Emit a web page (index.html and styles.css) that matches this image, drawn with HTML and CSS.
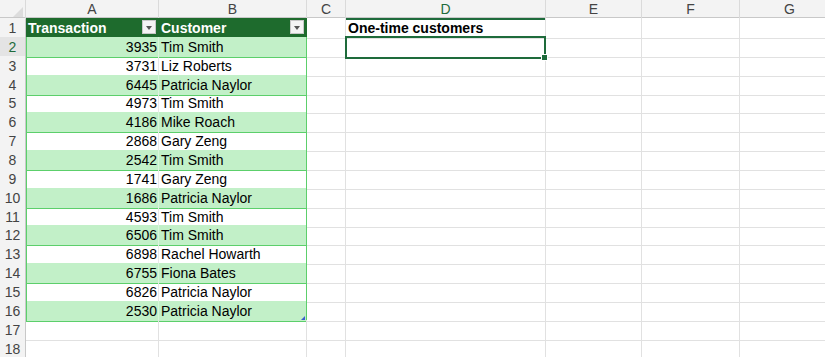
FILE: index.html
```html
<!DOCTYPE html>
<html lang="en">
<head>
    <meta charset="UTF-8">
    <meta name="viewport" content="width=device-width, initial-scale=1.0">
    <title>One-time customers</title>
    <link rel="stylesheet" href="styles.css">
</head>
<body>
    <div class="sheet">
        <div class="row colhead">
            <div class="corner"></div>
            <div class="ch">A</div>
            <div class="ch">B</div>
            <div class="ch">C</div>
            <div class="ch sel">D</div>
            <div class="ch">E</div>
            <div class="ch">F</div>
            <div class="ch">G</div>
        </div>

        <div class="row">
            <div class="rh">1</div>
            <div class="c th">Transaction<span class="filter"></span></div>
            <div class="c th">Customer<span class="filter"></span></div>
            <div class="c"></div>
            <div class="c bold">One-time customers</div>
            <div class="c"></div><div class="c"></div><div class="c"></div>
        </div>
        <div class="row">
            <div class="rh sel">2</div>
            <div class="c t band num">3935</div><div class="c t band last">Tim Smith</div>
            <div class="c"></div><div class="c active"><span class="handle"></span></div>
            <div class="c"></div><div class="c"></div><div class="c"></div>
        </div>
        <div class="row">
            <div class="rh">3</div>
            <div class="c t num">3731</div><div class="c t last">Liz Roberts</div>
            <div class="c"></div><div class="c"></div><div class="c"></div><div class="c"></div><div class="c"></div>
        </div>
        <div class="row">
            <div class="rh">4</div>
            <div class="c t band num">6445</div><div class="c t band last">Patricia Naylor</div>
            <div class="c"></div><div class="c"></div><div class="c"></div><div class="c"></div><div class="c"></div>
        </div>
        <div class="row">
            <div class="rh">5</div>
            <div class="c t num">4973</div><div class="c t last">Tim Smith</div>
            <div class="c"></div><div class="c"></div><div class="c"></div><div class="c"></div><div class="c"></div>
        </div>
        <div class="row">
            <div class="rh">6</div>
            <div class="c t band num">4186</div><div class="c t band last">Mike Roach</div>
            <div class="c"></div><div class="c"></div><div class="c"></div><div class="c"></div><div class="c"></div>
        </div>
        <div class="row">
            <div class="rh">7</div>
            <div class="c t num">2868</div><div class="c t last">Gary Zeng</div>
            <div class="c"></div><div class="c"></div><div class="c"></div><div class="c"></div><div class="c"></div>
        </div>
        <div class="row">
            <div class="rh">8</div>
            <div class="c t band num">2542</div><div class="c t band last">Tim Smith</div>
            <div class="c"></div><div class="c"></div><div class="c"></div><div class="c"></div><div class="c"></div>
        </div>
        <div class="row">
            <div class="rh">9</div>
            <div class="c t num">1741</div><div class="c t last">Gary Zeng</div>
            <div class="c"></div><div class="c"></div><div class="c"></div><div class="c"></div><div class="c"></div>
        </div>
        <div class="row">
            <div class="rh">10</div>
            <div class="c t band num">1686</div><div class="c t band last">Patricia Naylor</div>
            <div class="c"></div><div class="c"></div><div class="c"></div><div class="c"></div><div class="c"></div>
        </div>
        <div class="row">
            <div class="rh">11</div>
            <div class="c t num">4593</div><div class="c t last">Tim Smith</div>
            <div class="c"></div><div class="c"></div><div class="c"></div><div class="c"></div><div class="c"></div>
        </div>
        <div class="row">
            <div class="rh">12</div>
            <div class="c t band num">6506</div><div class="c t band last">Tim Smith</div>
            <div class="c"></div><div class="c"></div><div class="c"></div><div class="c"></div><div class="c"></div>
        </div>
        <div class="row">
            <div class="rh">13</div>
            <div class="c t num">6898</div><div class="c t last">Rachel Howarth</div>
            <div class="c"></div><div class="c"></div><div class="c"></div><div class="c"></div><div class="c"></div>
        </div>
        <div class="row">
            <div class="rh">14</div>
            <div class="c t band num">6755</div><div class="c t band last">Fiona Bates</div>
            <div class="c"></div><div class="c"></div><div class="c"></div><div class="c"></div><div class="c"></div>
        </div>
        <div class="row">
            <div class="rh">15</div>
            <div class="c t num">6826</div><div class="c t last">Patricia Naylor</div>
            <div class="c"></div><div class="c"></div><div class="c"></div><div class="c"></div><div class="c"></div>
        </div>
        <div class="row">
            <div class="rh">16</div>
            <div class="c t band num">2530</div><div class="c t band last">Patricia Naylor<span class="resize"></span></div>
            <div class="c"></div><div class="c"></div><div class="c"></div><div class="c"></div><div class="c"></div>
        </div>
        <div class="row">
            <div class="rh">17</div>
            <div class="c"></div><div class="c"></div><div class="c"></div><div class="c"></div><div class="c"></div><div class="c"></div><div class="c"></div>
        </div>
        <div class="row">
            <div class="rh">18</div>
            <div class="c"></div><div class="c"></div><div class="c"></div><div class="c"></div><div class="c"></div><div class="c"></div><div class="c"></div>
        </div>
    </div>
</body>
</html>
```

FILE: styles.css
```css
body {
    margin: 0;
    overflow: hidden;
    background: #fff;
    font-family: "Liberation Sans", Arial, sans-serif;
    font-size: 14px;
    color: #000;
}
.sheet {
    width: 840px;
}
.row {
    display: grid;
    grid-template-columns: 26px 133px 148px 39px 200px 96px 98px 100px;
    height: 18.86px;
}
.colhead {
    height: 18px;
    background: #f3f3f3;
    border-bottom: 1px solid #c8c8c8;
    box-sizing: border-box;
}
.corner {
    border-right: 1px solid #dadada;
    position: relative;
}
.corner::after {
    content: "";
    position: absolute;
    right: 2px;
    bottom: 2px;
    border-left: 10px solid transparent;
    border-bottom: 10px solid #dcdcdc;
}
.ch {
    border-right: 1px solid #dadada;
    text-align: center;
    color: #444;
    line-height: 18px;
}
.ch.sel {
    color: #1e6b3b;
    border-bottom: 2px solid #1e6b3b;
    margin-bottom: -1px;
}
.rh {
    background: #f3f3f3;
    border-right: 1px solid #c8c8c8;
    border-bottom: 1px solid #e2e2e2;
    box-sizing: border-box;
    text-align: center;
    color: #444;
    line-height: 20px;
}
.rh.sel {
    background: #e4e4e4;
    color: #1e6b3b;
}
.c {
    border-right: 1px solid #e1e1e1;
    border-bottom: 1px solid #e1e1e1;
    box-sizing: border-box;
    padding: 0 2px;
    line-height: 20px;
    white-space: nowrap;
    position: relative;
}
.bold {
    font-weight: bold;
}
.th {
    background: #1e6b2d;
    color: #fff;
    font-weight: bold;
    border-right-color: #1e6b2d;
    border-bottom-color: #1e6b2d;
}
.filter {
    position: absolute;
    right: 2px;
    top: 2px;
    width: 14px;
    height: 14px;
    box-sizing: border-box;
    background: #f4f4f4;
    border: 1px solid #c8c8c8;
}
.filter::after {
    content: "";
    position: absolute;
    left: 3px;
    top: 5px;
    border-left: 3.5px solid transparent;
    border-right: 3.5px solid transparent;
    border-top: 4px solid #555;
}
.t {
    border-bottom: 1px solid #5ccf6b;
    border-right-color: #e8e8e8;
}
.t.num {
    text-align: right;
    border-left: 1px solid #5ccf6b;
    padding-right: 1px;
}
.t.last {
    border-right: 1px solid #5ccf6b;
}
.band {
    background: #c2f0c8;
    border-right-color: #d8f6dc;
}
.active {
    border: 2px solid #1e6b3b;
    margin: -1px 0 -1px -1px;
    z-index: 1;
}
.handle {
    position: absolute;
    right: -4px;
    bottom: -4px;
    width: 5px;
    height: 5px;
    background: #1e6b3b;
    border: 1px solid #fff;
}
.resize {
    position: absolute;
    right: 1px;
    bottom: 1px;
    border-left: 4px solid transparent;
    border-bottom: 4px solid #3a5fcd;
}
```
